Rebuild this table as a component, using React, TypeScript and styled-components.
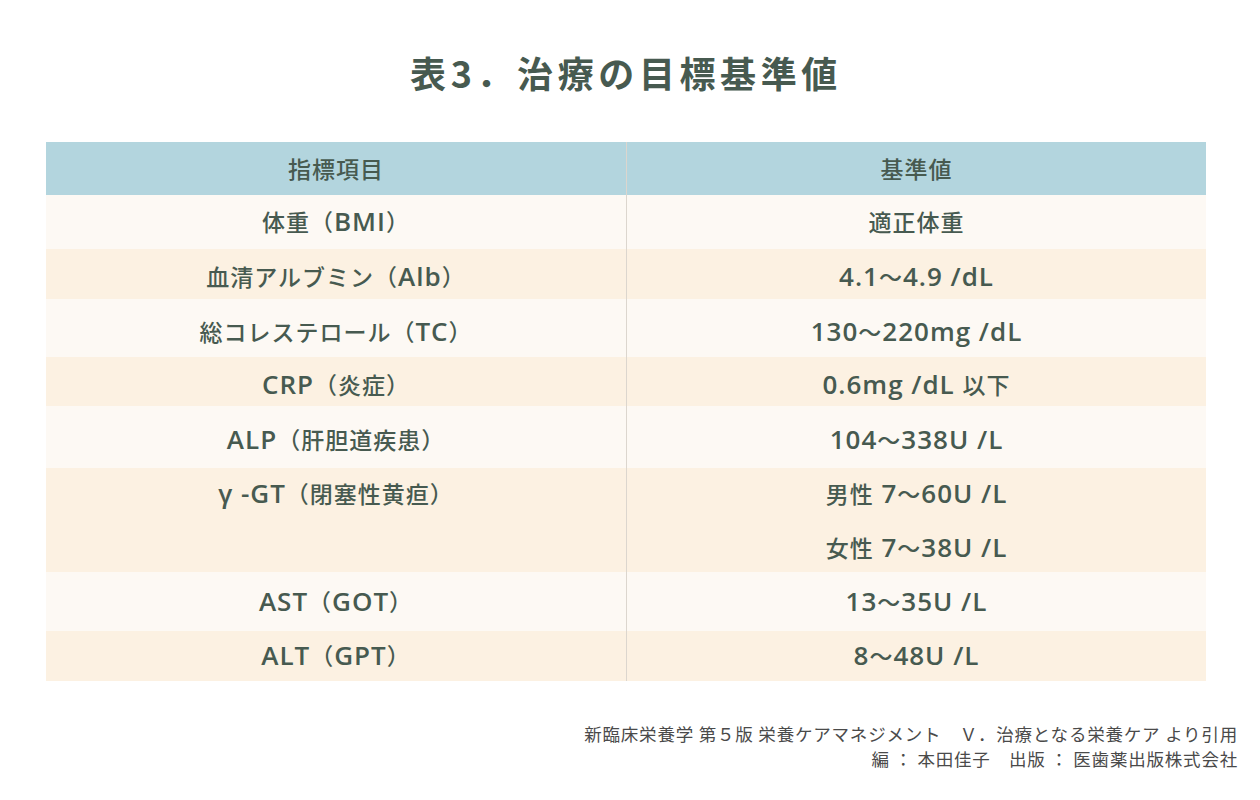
import React from "react";
import styled, { createGlobalStyle } from "styled-components";

const GlobalStyle = createGlobalStyle`
  html, body { margin: 0; padding: 0; background: #ffffff; }
  body {
    font-family: "Noto Sans CJK JP", "Noto Sans", sans-serif;
    color: #475a50;
  }
`;

const Page = styled.div`
  width: 1260px;
  height: 800px;
  box-sizing: border-box;
  padding: 48px 22px 0 46px;
  display: flex;
  flex-direction: column;
`;

const Title = styled.h1`
  margin: 0;
  height: 48px;
  line-height: 48px;
  text-align: center;
  font-size: 36px;
  font-weight: 700;
  letter-spacing: 4.6px;
  color: #475a50;
  width: 1160px;
`;

const Table = styled.div`
  margin-top: 46px;
  width: 1160px;
  display: flex;
  flex-direction: column;
`;

const Row = styled.div<{ $bg: string; $h: number }>`
  display: grid;
  grid-template-columns: 580px 580px;
  height: ${(p) => p.$h}px;
  background: ${(p) => p.$bg};
`;

const Cell = styled.div<{ $top: number; $header?: boolean }>`
  box-sizing: border-box;
  padding-top: ${(p) => p.$top}px;
  text-align: center;
  font-size: 23px;
  line-height: 30px;
  font-weight: 500;
  letter-spacing: 1px;
  color: #475a50;
  white-space: pre;
  & + & {
    border-left: 1px solid ${(p) => (p.$header ? "#a9c8d0" : "#dcd6ce")};
  }
`;

const Latin = styled.span`
  font-family: "Open Sans", "Noto Sans", sans-serif;
  font-size: 26px;
  font-weight: 600;
  letter-spacing: 1px;
`;

const Line = styled.div<{ $gap?: number }>`
  height: 30px;
  margin-top: ${(p) => p.$gap ?? 0}px;
`;

const Footer = styled.div`
  margin-top: 40px;
  width: 1192px;
  text-align: right;
  font-size: 17.5px;
  line-height: 25px;
  font-weight: 400;
  color: #4a4a4a;
  letter-spacing: 0.8px;
  white-space: pre;
`;

const LIGHT = "#fdf9f4";
const DARK = "#fcf1e2";
const HEAD = "#b3d5de";

type RowData = { left: string; right: string[]; h: number; off: number };

const rows: RowData[] = [
  { left: "体重（BMI）", right: ["適正体重"], h: 54, off: 26 },
  { left: "血清アルブミン（Alb）", right: ["4.1～4.9 /dL"], h: 50, off: 27 },
  { left: "総コレステロール（TC）", right: ["130～220mg /dL"], h: 58, off: 32 },
  { left: "CRP（炎症）", right: ["0.6mg /dL 以下"], h: 49, off: 27 },
  { left: "ALP（肝胆道疾患）", right: ["104～338U /L"], h: 62, off: 33 },
  { left: "γ -GT（閉塞性黄疸）", right: ["男性 7～60U /L", "女性 7～38U /L"], h: 104, off: 25 },
  { left: "AST（GOT）", right: ["13～35U /L"], h: 59, off: 29 },
  { left: "ALT（GPT）", right: ["8～48U /L"], h: 50, off: 24 },
];

const LATIN_RUN = /([A-Za-z0-9.\/γ\- ]+)/;

function Mixed({ text }: { text: string }) {
  const parts = text.split(LATIN_RUN).filter((p) => p.length > 0);
  return (
    <>
      {parts.map((p, i) =>
        /^[A-Za-z0-9.\/γ\- ]+$/.test(p) ? (
          <Latin key={i}>{p}</Latin>
        ) : (
          <React.Fragment key={i}>{p}</React.Fragment>
        )
      )}
    </>
  );
}

export default function App() {
  return (
    <>
      <GlobalStyle />
      <Page>
        <Title>表3．治療の目標基準値</Title>
        <Table>
          <Row $bg={HEAD} $h={53}>
            <Cell $top={11} $header>指標項目</Cell>
            <Cell $top={11} $header>基準値</Cell>
          </Row>
          {rows.map((r, i) => (
            <Row key={i} $bg={i % 2 === 0 ? LIGHT : DARK} $h={r.h}>
              <Cell $top={r.off - 15}>
                <Mixed text={r.left} />
              </Cell>
              <Cell $top={r.off - 15}>
                {r.right.map((t, j) => (
                  <Line key={j} $gap={j > 0 ? 24 : 0}>
                    <Mixed text={t} />
                  </Line>
                ))}
              </Cell>
            </Row>
          ))}
        </Table>
        <Footer>
          <div>新臨床栄養学 第５版 栄養ケアマネジメント　Ｖ．治療となる栄養ケア より引用</div>
          <div>編 ： 本田佳子　出版 ： 医歯薬出版株式会社</div>
        </Footer>
      </Page>
    </>
  );
}
